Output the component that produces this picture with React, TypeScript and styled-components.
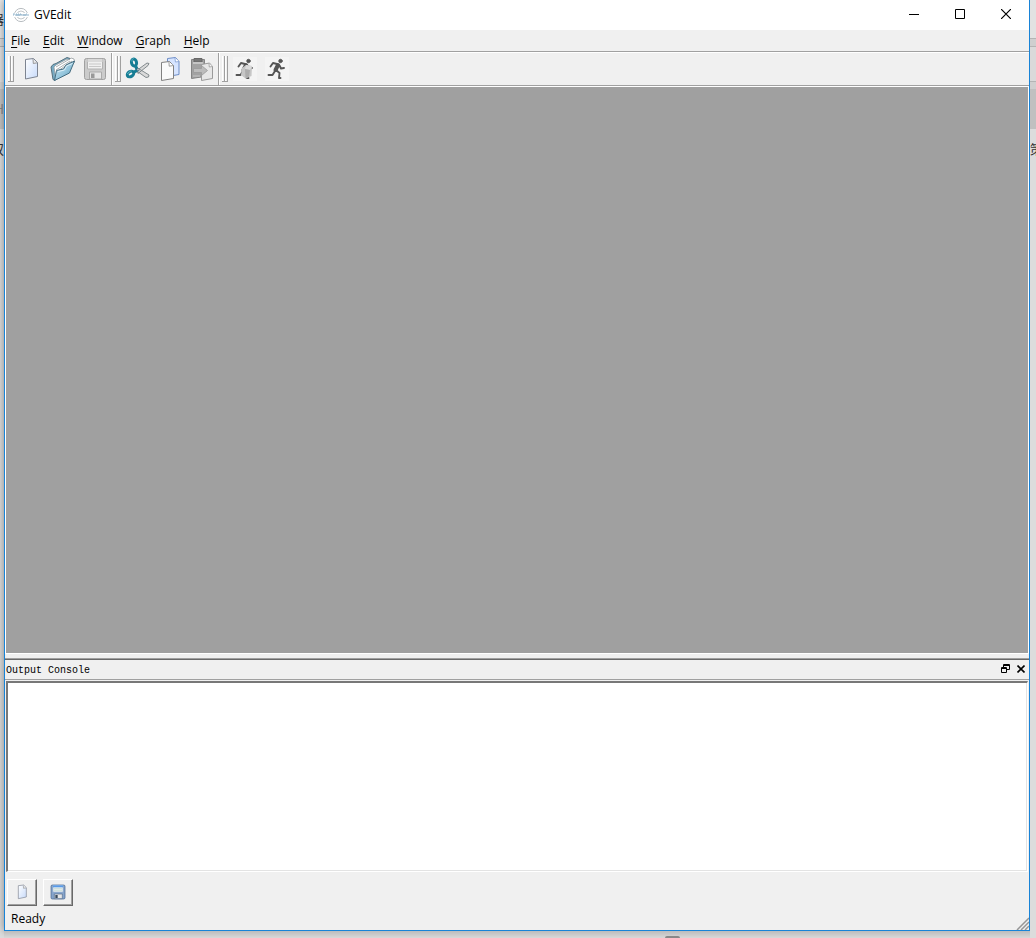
import React from 'react';
import styled, { createGlobalStyle } from 'styled-components';

const GlobalStyle = createGlobalStyle`
  *, *::before, *::after { box-sizing: border-box; }
  body { margin: 0; background: #e4e4e4; color: #000; font: 13px/20px "Open Sans", "Noto Sans", sans-serif; }
  button { font: inherit; color: inherit; }
`;

const Desktop = styled.div`
  display: flex;
  height: 100vh;
  overflow: hidden;
`;
const Strip = styled.div<{ $width: number }>`
  width: ${p => p.$width}px;
  flex: none;
  display: flex;
  flex-direction: column;
  overflow: hidden;
  background: #dcdcdc;
`;
const Band = styled.div<{ $height: number; $tone: string; $end?: boolean; $plain?: boolean; $ink?: string }>`
  height: ${p => p.$height}px;
  flex: none;
  display: flex;
  align-items: center;
  justify-content: ${p => (p.$end ? 'flex-end' : 'flex-start')};
  overflow: hidden;
  background: ${p => p.$tone};
  border-bottom: ${p => (p.$plain ? '0' : '1px solid #b4b4b4')};
  font: 13px/16px "Noto Sans CJK SC", sans-serif;
  color: ${p => p.$ink ?? '#333'};
`;
const Center = styled.div`
  flex: 1;
  min-width: 0;
  display: flex;
  flex-direction: column;
`;
const Below = styled.div`
  height: 7px;
  flex: none;
  display: flex;
  justify-content: center;
  align-items: flex-end;
  padding-left: 310px;
  background: linear-gradient(#bcbcbc, #d8d8d8);
`;
const Handle = styled.div`
  width: 15px;
  height: 2px;
  background: #888;
  border-radius: 2px 2px 0 0;
`;
const Window = styled.div`
  flex: 1;
  min-height: 0;
  display: flex;
  flex-direction: column;
  background: #f0f0f0;
  border: solid #1883d7;
  border-width: 0 1px 1px;
  box-shadow: 0 0 8px rgba(0, 0, 0, 0.4);
`;
const TitleBar = styled.header`
  height: 30px;
  flex: none;
  display: flex;
  align-items: center;
  background: #fff;
  padding-left: 8px;
`;
const Title = styled.h1`
  flex: 1;
  margin: 0 0 0 5px;
  font-size: 12px;
  line-height: 20px;
  font-weight: 400;
`;
const CaptionButton = styled.button`
  width: 46px;
  height: 30px;
  padding: 0 0 2px;
  border: 0;
  background: none;
  display: flex;
  align-items: center;
  justify-content: center;
`;
const MenuBar = styled.nav`
  height: 22px;
  flex: none;
  display: flex;
  align-items: center;
  gap: 1px;
  border-bottom: 1px solid #a0a0a0;
`;
const MenuItem = styled.button`
  padding: 0 6px;
  border: 0;
  background: none;
  font-size: 12px;
  line-height: 20px;
  u { text-underline-offset: 2px; }
`;
const ToolBar = styled.div`
  height: 34px;
  flex: none;
  display: flex;
  border-top: 1px solid #fff;
  border-bottom: 1px solid #a0a0a0;
`;
const ToolGroup = styled.div`
  display: flex;
  align-items: center;
  padding-left: 3px;
  border-right: 1px solid #a0a0a0;
  box-shadow: 1px 0 #fff;
  &:last-child { border-right: 0; box-shadow: none; }
`;
const Grip = styled.div`
  height: 26px;
  margin-right: 1px;
  display: flex;
  &::before, &::after {
    content: "";
    width: 3px;
    border: solid #a0a0a0;
    border-width: 0 1px 1px 0;
    background: linear-gradient(90deg, #fff 1px, #f0f0f0 1px);
  }
`;
const ToolButton = styled.button`
  width: 32px;
  height: 32px;
  padding: 0;
  border: 0;
  background: none;
  display: grid;
  place-items: center;
`;
const Workspace = styled.main`
  flex: 1;
  min-height: 0;
  background: #a0a0a0;
  border: 1px solid #fff;
`;
const Splitter = styled.div`
  height: 6px;
  flex: none;
  border-bottom: 1px solid #696969;
  box-shadow: inset 0 -1px #a0a0a0;
`;
const Dock = styled.section`
  flex: none;
  height: 249px;
  display: flex;
  flex-direction: column;
`;
const DockHeader = styled.div`
  height: 20px;
  flex: none;
  display: flex;
  align-items: flex-start;
  padding: 0 1px;
  border-bottom: 1px solid #a0a0a0;
`;
const DockTitle = styled.h2`
  flex: 1;
  margin: 0;
  font: 400 10px/22px "Liberation Mono", monospace;
`;
const DockButton = styled.button`
  width: 15px;
  height: 17px;
  padding: 0;
  border: 0;
  background: none;
  display: grid;
  place-items: center;
`;
const Console = styled.textarea`
  flex: 1;
  margin: 1px;
  padding: 2px;
  resize: none;
  outline: none;
  background: #fff;
  border: 1px solid #fff;
  border-top: 2px solid #787878;
  border-left: 2px solid #787878;
  border-radius: 0;
  box-shadow: inset -1px -1px #e3e3e3;
`;
const DockActions = styled.div`
  height: 36px;
  flex: none;
  display: flex;
  align-items: center;
  gap: 6px;
  padding: 2px 2px 0;
`;
const ActionButton = styled.button`
  width: 30px;
  height: 27px;
  padding: 0;
  display: grid;
  place-items: center;
  background: #f0f0f0;
  border: 1px solid #fff;
  border-right-color: #696969;
  border-bottom-color: #696969;
  border-radius: 0;
  box-shadow: inset -1px -1px #a0a0a0;
`;
const StatusBar = styled.footer`
  height: 21px;
  flex: none;
  display: flex;
  justify-content: space-between;
  padding-left: 6px;
  font-size: 12px;
  line-height: 20px;
  svg { align-self: flex-end; }
`;

const Logo = () => (
  <svg width="16" height="16" viewBox="0 0 16 16" fill="none" aria-hidden="true">
    <circle cx="8" cy="8" r="6.6" stroke="#b9bec2" />
    <circle cx="8" cy="8" r="4" stroke="#c5c9cc" />
    <path d="M0 6h16v4H0z" fill="#fff" />
    <path d="M0 9V7h2M3 9V7h1v2M5 9V7h1v2M7 9V7h1v1M9 7v2M10 8h1M11 7v2M12 9V7M13 9V7h1M15 7v2" stroke="#8fb2ca" />
  </svg>
);

const PagePicture = ({ size = 24 }: { size?: number }) => (
  <svg width={size} height={size} viewBox="0 0 24 24" aria-hidden="true">
    <defs><linearGradient id="paper" x1="0" y1="0" x2="1" y2="1"><stop stopColor="#fff" /><stop offset="1" stopColor="#c7dafa" /></linearGradient></defs>
    <path d="M6.5 2.5 14.5 1.5l4 4v14L6.5 22z" fill="url(#paper)" stroke="#7d8491" />
    <path d="m14 2 .3 4.5 4-.7" fill="#e8e8e8" stroke="#858585" strokeWidth=".8" />
  </svg>
);
const FolderPicture = () => (
  <svg width="26" height="26" viewBox="0 0 26 26" aria-hidden="true">
    <defs>
      <linearGradient id="folder" x1="0" y1="0" x2="1" y2="1"><stop stopColor="#d3edf7" /><stop offset=".55" stopColor="#94c5dc" /><stop offset="1" stopColor="#4c8dad" /></linearGradient>
    </defs>
    <path d="M1 11 3 8.500l3-1L17 1.500l3 1 1 3L5 24.500l-2-1z" fill="#78acc5" stroke="#56707e" />
    <path d="m4 11 2-2 11-6 2 1 2-2 3 1 .5 3-5 6-14 9z" fill="#fff" stroke="#979da0" strokeWidth=".8" />
    <path d="m6 11 12-7M6 14l14-9M8 15l14-10" stroke="#949ca0" strokeWidth=".8" />
    <path d="m4.500 24.500 2-10 7-1.500 2.500-4 8.500-4-5 12z" fill="url(#folder)" stroke="#456d81" />
    <path d="m8 15.500 6.500-1.500 2-4 6-2.500" fill="none" stroke="#ecf9fe" strokeWidth=".8" />
  </svg>
);
const DiskPicture = ({ color = false, size = 24 }: { color?: boolean; size?: number }) => (
  <svg width={size} height={size} viewBox="0 0 24 24" aria-hidden="true">
    <rect x="1.5" y="1.5" width="21" height="21" rx="2" fill={color ? '#86a4cb' : '#cbcbcb'} stroke={color ? '#43628c' : '#a0a0a0'} />
    <path d="M4.5 2h15v10h-15z" fill="#f0f0f0" stroke={color ? '#9cb5d2' : '#b2b2b2'} />
    <path d="M4.5 2h15v3h-15z" fill={color ? '#599be8' : '#dadada'} />
    <path d="M6 7h12M6 9.500h12" stroke={color ? '#b1d7cf' : '#c8c8c8'} />
    <path d="M6.5 15h12v7h-12z" fill="#e6e6e6" stroke={color ? '#526b8d' : '#aaa'} />
    <path d="M8 16.500h3.500V21H8z" fill={color ? '#35475a' : '#999'} />
  </svg>
);
const CutPicture = () => (
  <svg width="26" height="26" viewBox="0 0 26 26" fill="none" aria-hidden="true">
    <path d="m11 15 11-8 2 .5-1 2-10 8zM11 11l13 8-.5 2-2.500.5-10-7z" fill="#dadada" stroke="#788184" strokeWidth=".9" />
    <ellipse cx="9" cy="6.500" rx="2.500" ry="3.500" stroke="#167d94" strokeWidth="3" transform="rotate(-14 9 6.500)" />
    <ellipse cx="5.500" cy="18" rx="3.500" ry="2.500" stroke="#167d94" strokeWidth="3" transform="rotate(-32 5.500 18)" />
    <path d="m10 9 2.500 5-4 2.500" stroke="#167d94" strokeWidth="3" />
    <path d="M7 5.500c-.3-1.500.5-3 1.500-3M2.500 18c.5-1.500 2.500-3 4-3" stroke="#68bccc" strokeWidth=".9" />
    <circle cx="13" cy="13.500" r="1" fill="#edf3f3" stroke="#667" strokeWidth=".6" />
  </svg>
);
const CopyPicture = () => (
  <svg width="24" height="26" viewBox="0 0 24 26" aria-hidden="true">
    <path d="M9.5 2.500 17.500 1.500l3.500 4v13l-11.500 2z" fill="#d6e4ff" stroke="#6d8dc7" />
    <path d="m17 2 .4 4 3.600-.5" fill="#fff" stroke="#7090cc" strokeWidth=".7" />
    <path d="m3.500 6.500 8-1 4 4v13l-12 2z" fill="#fafafa" stroke="#818181" />
    <path d="m11 6 .2 4.200 4.300-.7" fill="#fff" stroke="#878787" strokeWidth=".8" />
  </svg>
);
const PastePicture = () => (
  <svg width="26" height="26" viewBox="0 0 26 26" aria-hidden="true">
    <path d="M2.500 3.500h13v17l-13 2z" fill="#a2a2a2" stroke="#838383" />
    <path d="M5 2.500h8V6H5z" fill="#777" stroke="#686868" />
    <path d="M4 6h10v2H4zM4 19.500h7v1H4z" fill="#c5c5c5" />
    <path d="m12.500 8.500 8-1.500 3 3.500v12l-11 2z" fill="#e7e7e7" stroke="#9b9b9b" />
    <path d="m20 7.500.3 3.500 3.200-.5" fill="#f5f5f5" stroke="#999" strokeWidth=".8" />
    <path d="M4.500 12.500h8V9.500l6 5-6 5v-3h-8z" fill="#bcbcbc" stroke="#999" strokeWidth=".8" />
  </svg>
);
const RunnerPicture = ({ layout = false }: { layout?: boolean }) => (
  <svg width="24" height="24" viewBox="0 0 24 24" aria-hidden="true">
    <path d="M0 0h24v24H0z" fill="#f4f4f4" />
    <g fill="none" stroke="#555" strokeLinecap="round" strokeLinejoin="round">
      <circle cx="15.500" cy="4" r="1.700" fill="#555" />
      <path d="m13 8-2.500 5" strokeWidth="4" />
      <path d="m12 7-4-1-2.500 3.500M14.500 8.500l1.500 3 3-.5M10 14l-2.500 4H3.500M11 13l3.500 3-.5 5h1.500" strokeWidth="1.900" />
    </g>
    {layout && (
      <g>
        <path d="m9 11 4-3 6 1-.5 10-6 2.500L8 18z" fill="#c6c6c6" />
        <path d="m13 8 6 1-2 4-5-1z" fill="#dcdcdc" />
        <path d="m12 12 5 1-1 6.500-3.500 2z" fill="#adadad" />
      </g>
    )}
  </svg>
);

const menus = ['File', 'Edit', 'Window', 'Graph', 'Help'];
const tools = [
  [
    { label: 'New', picture: <PagePicture /> },
    { label: 'Open', picture: <FolderPicture /> },
    { label: 'Save', picture: <DiskPicture /> },
  ],
  [
    { label: 'Cut', picture: <CutPicture /> },
    { label: 'Copy', picture: <CopyPicture /> },
    { label: 'Paste', picture: <PastePicture /> },
  ],
  [
    { label: 'Settings', picture: <RunnerPicture layout /> },
    { label: 'Layout', picture: <RunnerPicture /> },
  ],
];

export default function App() {
  return (
    <>
      <GlobalStyle />
      <Desktop>
        <Strip $width={4}>
          <Band $height={39} $tone="#e6e6e6" $end>器</Band>
          <Band $height={8} $tone="#dcdcdc" />
          <Band $height={35} $tone="#e2e2e2" $plain />
          <Band $height={7} $tone="#d6d6d6" $plain />
          <Band $height={40} $tone="#c4c4c4" $ink="#888" $end $plain>H</Band>
          <Band $height={40} $tone="#dedede" $end $plain>双</Band>
        </Strip>
        <Center>
          <Window>
            <TitleBar>
              <Logo />
              <Title>GVEdit</Title>
              <CaptionButton aria-label="Minimize">
                <svg width="10" height="10"><path d="M0 5.5h10" stroke="#000" /></svg>
              </CaptionButton>
              <CaptionButton aria-label="Maximize">
                <svg width="10" height="10"><path d="M.5.5h9v9h-9z" fill="none" stroke="#000" /></svg>
              </CaptionButton>
              <CaptionButton aria-label="Close">
                <svg width="10" height="10"><path d="m0 0 10 10m0-10-10 10" stroke="#000" strokeWidth="1.2" /></svg>
              </CaptionButton>
            </TitleBar>
            <MenuBar aria-label="Main menu">
              {menus.map(name => <MenuItem key={name}><u>{name[0]}</u>{name.slice(1)}</MenuItem>)}
            </MenuBar>
            <ToolBar role="toolbar">
              {tools.map((group, i) => (
                <ToolGroup key={i}>
                  <Grip />
                  {group.map(t => <ToolButton key={t.label} aria-label={t.label}>{t.picture}</ToolButton>)}
                </ToolGroup>
              ))}
            </ToolBar>
            <Workspace />
            <Splitter />
            <Dock>
              <DockHeader>
                <DockTitle id="console-title">Output Console</DockTitle>
                <DockButton aria-label="Float">
                  <svg width="9" height="9" fill="none" stroke="#000"><path d="M2.5 3V.5h6v5H6M2 1.5h7M.5 3.5h5v5h-5zM0 4.5h6" /></svg>
                </DockButton>
                <DockButton aria-label="Close console">
                  <svg width="8" height="8"><path d="m.5.5 7 7m0-7-7 7" stroke="#000" strokeWidth="1.6" /></svg>
                </DockButton>
              </DockHeader>
              <Console aria-labelledby="console-title" />
              <DockActions>
                <ActionButton aria-label="New log"><PagePicture size={16} /></ActionButton>
                <ActionButton aria-label="Save log"><DiskPicture color size={16} /></ActionButton>
              </DockActions>
            </Dock>
            <StatusBar>
              <span>Ready</span>
              <svg width="13" height="13" aria-hidden="true" stroke="#969696" strokeWidth="1.5"><path d="M1 13 13 1M5 13l8-8M9 13l4-4" /></svg>
            </StatusBar>
          </Window>
          <Below><Handle /></Below>
        </Center>
        <Strip $width={6}>
          <Band $height={39} $tone="#e2e2e2" />
          <Band $height={8} $tone="#cfcfcf" />
          <Band $height={35} $tone="#dadada" />
          <Band $height={7} $tone="#cfcfcf" $plain />
          <Band $height={40} $tone="#c0c0c0" $plain />
          <Band $height={40} $tone="#dcdcdc" $plain>策</Band>
        </Strip>
      </Desktop>
    </>
  );
}
